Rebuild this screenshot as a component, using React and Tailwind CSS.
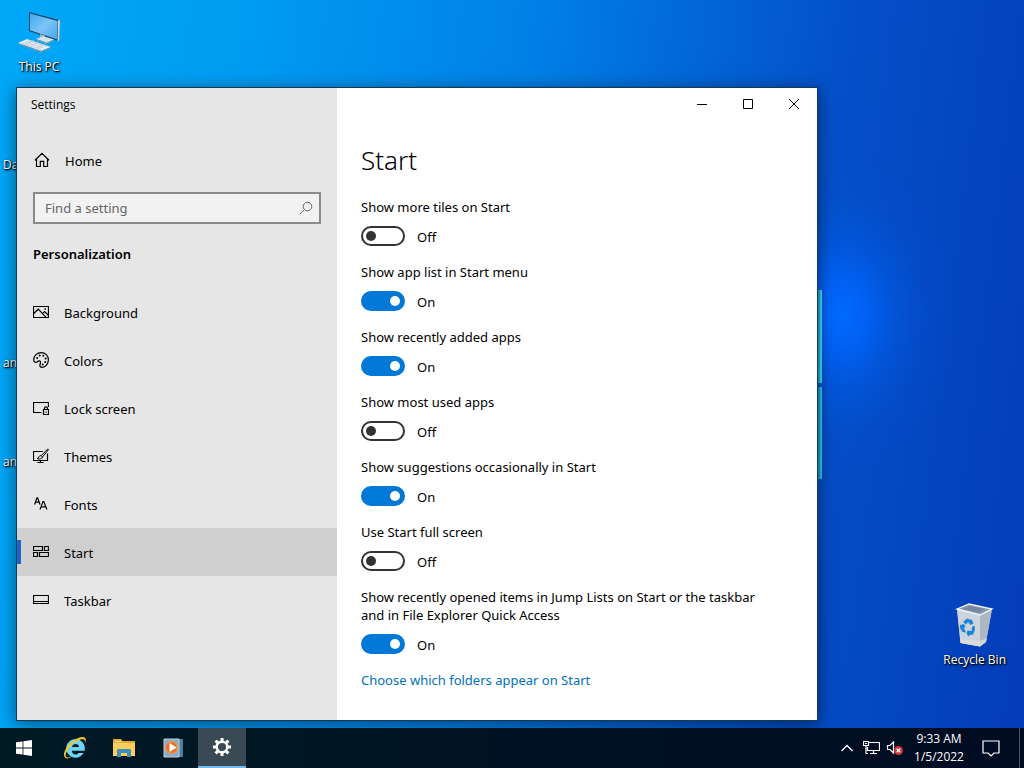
import React, { useState } from 'react';

const NAV_ITEMS = [
  { id: 'background', label: 'Background', icon: BackgroundIcon },
  { id: 'colors', label: 'Colors', icon: ColorsIcon },
  { id: 'lock', label: 'Lock screen', icon: LockScreenIcon },
  { id: 'themes', label: 'Themes', icon: ThemesIcon },
  { id: 'fonts', label: 'Fonts', icon: FontsIcon },
  { id: 'start', label: 'Start', icon: StartTilesIcon },
  { id: 'taskbar', label: 'Taskbar', icon: TaskbarIcon },
];

const SETTINGS = [
  { id: 'tiles', label: 'Show more tiles on Start', on: false },
  { id: 'app-list', label: 'Show app list in Start menu', on: true },
  { id: 'recent-apps', label: 'Show recently added apps', on: true },
  { id: 'most-used', label: 'Show most used apps', on: false },
  { id: 'suggestions', label: 'Show suggestions occasionally in Start', on: true },
  { id: 'full-screen', label: 'Use Start full screen', on: false },
  {
    id: 'jump-lists',
    label: 'Show recently opened items in Jump Lists on Start or the taskbar and in File Explorer Quick Access',
    on: true,
  },
];

// Thin 16px line icons used in the sidebar
function LineIcon({ children }) {
  return (
    <svg
      width="16"
      height="16"
      viewBox="0 0 16 16"
      fill="none"
      stroke="currentColor"
      strokeWidth="1.2"
      aria-hidden="true"
      className="shrink-0"
    >
      {children}
    </svg>
  );
}

function HomeIcon() {
  return (
    <LineIcon>
      <path d="M1 8.2 8 1.3l7 6.9M2.5 7v7.5h3.8V9.3h3.4v5.2h3.8V7" />
    </LineIcon>
  );
}

function BackgroundIcon() {
  return (
    <LineIcon>
      <path d="M.5 2.5h15v11H.5z" />
      <path d="m.7 9.5 4.6-4.3 7.7 8.1M9.6 9.4l2-1.8 3.8 3.7" />
      <path d="M11.5 5h1.4" strokeWidth="1.4" />
    </LineIcon>
  );
}

function ColorsIcon() {
  return (
    <LineIcon>
      <path d="M.7 7.8C.8 3.7 4.1.6 8.2.6c4.1 0 7.2 3.2 7.2 7.2 0 4.2-2.9 7.6-6.2 7.6-1.7 0-2.4-.9-2.3-2.2.1-1.3.8-1.900.6-3C7.300 9.200 6.600 8.700 5.800 8.900c-1.100.3-1.500 1.400-2.900 1.400C1.400 10.300.7 9.100.7 7.800z" />
      <g fill="currentColor" stroke="none">
        <circle cx="4.2" cy="6" r="1" />
        <circle cx="6.7" cy="3.5" r="1" />
        <circle cx="10.3" cy="3.7" r="1" />
        <circle cx="12.6" cy="6.5" r="1" />
        <circle cx="12.2" cy="9.9" r="1" />
        <circle cx="9.7" cy="12.4" r="1" />
      </g>
    </LineIcon>
  );
}

function LockScreenIcon() {
  return (
    <LineIcon>
      <path d="M8.5 12.500h-8v-10h15v4.500" />
      <path d="M10.500 9.500h5v5h-5zM11.500 9.500V8.300a1.500 1.500 0 0 1 3 0v1.200M13 11.500v1.200" />
    </LineIcon>
  );
}

function ThemesIcon() {
  return (
    <LineIcon>
      <path d="M10 3.500H.5v9h14V5.500M7.500 12.500v2M4.500 14.500h6" />
      <path
        d="m14.800.9-6.600 6.800 1.300 1.300 6-7.400zM8.200 7.700c-1.500-.2-2.300.6-2.600 1.700-.2.700-.7 1-1.600 1.200 2.300.8 5 .4 5.500-1.600"
        strokeWidth="1"
      />
    </LineIcon>
  );
}

function FontsIcon() {
  return (
    <LineIcon>
      <path d="M1.600 8.500 4 1.800h.6L7 8.500M2.500 6.200h3.600M7 13.500l3-8h.8l3.100 8M8 10.900h4.900" />
    </LineIcon>
  );
}

function StartTilesIcon() {
  return (
    <LineIcon>
      <path d="M.5 2.500h9v4h-9zM11.500 2.500h4v4h-4zM.5 8.500h4v4h-4zM6.500 8.500h9v4h-9z" />
    </LineIcon>
  );
}

function TaskbarIcon() {
  return (
    <LineIcon>
      <path d="M.5 3.500h15v8H.5zM.5 9.500h15" />
    </LineIcon>
  );
}

function ThisPcIcon() {
  return (
    <svg width="46" height="46" viewBox="0 0 46 46" aria-hidden="true">
      <defs>
        <linearGradient id="pc-screen" x1="0" y1="0" x2="1" y2="1">
          <stop offset="0" stopColor="#3fa9f0" />
          <stop offset=".5" stopColor="#7cc4f6" />
          <stop offset="1" stopColor="#45a6ee" />
        </linearGradient>
      </defs>
      <path d="M13 2 43 10 42 31 13 21z" fill="#1d4568" />
      <path d="m42 10 2 .6-.8 20-1.700.7z" fill="#c8d5dc" />
      <path d="M14 3.500 41.500 11 41 29.300 14 20.200z" fill="url(#pc-screen)" />
      <path d="m24 24 5 1.800v2.500l-5-1.600z" fill="#9db4c2" />
      <path d="m20 29 7-2.700 11 3.200-7 3.300z" fill="#d7e2e8" />
      <path d="m20 29 11 3.800 7-3.300v1l-7 3.500-11-4z" fill="#7f9bab" />
      <path d="M2 33 11 29 35 37 25 41z" fill="#e9eff2" />
      <path d="m2 33 23 8 10-4v1l-10 4.500L2 34z" fill="#7995a8" />
      <path d="m6 33 19 6.600M9 31.700l19 6.500M12 30.500l19 6M10 34l8-3.500M15 36l8-4M21 38l8-4" stroke="#b9c7d0" strokeWidth=".8" />
    </svg>
  );
}

function RecycleBinIcon() {
  return (
    <svg width="42" height="46" viewBox="0 0 42 46" aria-hidden="true">
      <path d="M3 6 15 1l23 5-6 33-6 4.500L6.500 40z" fill="#b9c3cf" />
      <path d="m3 6 23 6 0 31.500L6.500 40z" fill="#ccd3da" />
      <path d="m26 12 12-6-6 33-6 4.500z" fill="#aeb6c2" />
      <path d="M3 6 15 1l23 5-12 6z" fill="#8a9cb2" stroke="#eef3f7" strokeWidth="1.300" />
      <path d="m8 6 8-3 15 3-6 3.500z" fill="#76889e" />
      <path d="m6 36 1 4 19 3.500 6-4.500.6-4-7 3z" fill="#e3e1dc" opacity=".7" />
      <g fill="#1b86d8">
        <path d="m9 19 4-3.500 5 1.500 1.500 3.500-3 1.500-2.500-3-2 2.500z" />
        <path d="m6 22 4-1 1.500 3-1.500 1 2 4.500-3.500-.5L6 25z" />
        <path d="m13.500 27.500 4 .5.500-4 2.500-1.500L21 27l-2 4.500-4 .8-.5 1.500-2-3.500z" />
      </g>
    </svg>
  );
}

function WindowsIcon() {
  return (
    <svg width="16" height="16" viewBox="0 0 16 16" fill="#fff" aria-hidden="true">
      <path d="M0 2.300 6.600 1.400v6.200H0zM7.400 1.300 16 0v7.600H7.400zM0 8.400h6.600v6.200L0 13.700zM7.400 8.400H16V16l-8.600-1.300z" />
    </svg>
  );
}

function InternetExplorerIcon() {
  return (
    <svg width="24" height="24" viewBox="0 0 24 24" aria-hidden="true">
      <path
        d="M21.800 12.800A9.300 9.300 0 1 0 20.600 17h-5.100c-.7 1-1.700 1.500-2.900 1.500-2.200 0-3.600-1.500-3.700-3.700h12.800c.1-.7.1-1.400.1-2zM9 11c.4-1.900 1.700-3 3.600-3s3.200 1.100 3.400 3z"
        fill="#6dd5f7"
      />
      <path
        d="M3.200 22.300C-.6 20.500.6 14.500 5.800 8.800 11 3.100 18.600-.6 21.700 1.500c1.600 1.100 1.400 3.500 0 6 .5-2.200.3-3.500-.9-4-2.800-1-8.700 1.800-13.200 6.700C3 15.200 1.400 20 3.700 21.200c1.400.7 3.400.1 5.500-1.100-2 1.700-4.400 2.900-6 2.200z"
        fill="#f3c62c"
      />
    </svg>
  );
}

function ExplorerIcon() {
  return (
    <svg width="22" height="20" viewBox="0 0 22 20" aria-hidden="true">
      <path d="M0 2c0-.6.4-1 1-1h7l1.500 2H21c.6 0 1 .4 1 1v4H0z" fill="#e9a92c" />
      <path d="M2 3.500h6" stroke="#fff" strokeWidth=".8" />
      <path d="M0 5h22v13H0z" fill="#fbcf58" />
      <path d="M4 19v-6.500C4 11.700 4.700 11 5.500 11h11c.8 0 1.500.7 1.500 1.500V19h-4v-4H8v4z" fill="#3f8cc4" />
    </svg>
  );
}

function MediaPlayerIcon() {
  return (
    <svg width="20" height="20" viewBox="0 0 20 20" aria-hidden="true">
      <path d="M4 1h16v18H4z" fill="#4d7f9c" />
      <path d="M1 1h15v18H1z" fill="#88adc4" />
      <path d="M1 1h15v18H1z" fill="none" stroke="#b8d2e0" />
      <circle cx="8.500" cy="9.500" r="6.500" fill="#e8742c" />
      <circle cx="8.500" cy="9.500" r="6" fill="none" stroke="#f4a56b" />
      <path d="m6.500 5 7 4.500-7 4.500z" fill="#fff" />
    </svg>
  );
}

function GearIcon() {
  return (
    <svg width="20" height="20" viewBox="0 0 20 20" fill="none" stroke="#fff" aria-hidden="true">
      <circle cx="10" cy="10" r="5.300" strokeWidth="2.400" />
      <path
        d="M10 1v3.500M10 15.500V19M1 10h3.500M15.500 10H19M3.600 3.600l2.500 2.500M13.900 13.900l2.500 2.500M3.600 16.400l2.500-2.500M13.900 6.100l2.500-2.500"
        strokeWidth="3"
      />
    </svg>
  );
}

function DesktopShortcut({ className, icon, label }) {
  return (
    <button
      type="button"
      className={`absolute flex flex-col items-center gap-[3px] font-['Open_Sans','Noto_Sans',sans-serif] text-xs leading-4 text-white text-shadow-[1px_1px_1px_#000,1px_1px_3px_#000] ${className}`}
    >
      {icon}
      <span className="whitespace-nowrap">{label}</span>
    </button>
  );
}

function Wallpaper() {
  return (
    <div className="absolute inset-0 overflow-hidden bg-[linear-gradient(97deg,#00a8f8_0%,#009cf2_22%,#0080e6_48%,#0450c8_76%,#043cb8_100%)]">
      <div className="absolute inset-0 bg-[radial-gradient(ellipse_120px_160px_at_82%_41%,#006affff_0%,#0066ffd0_20%,#0060f070_45%,#0058e020_72%,#0050d000_100%)]" />
      <div className="absolute top-[290px] right-[202px] h-[93px] w-5 border-r-2 border-[#4cdcf8] bg-[#20b0d8]" />
      <div className="absolute top-[387px] right-[202px] h-[92px] w-5 border-r-2 border-[#38c8f0] bg-[#18a0d0]" />
    </div>
  );
}

function Toggle({ id, label, on, onChange }) {
  return (
    <div className="flex flex-col gap-[10px]">
      <label htmlFor={id}>{label}</label>
      <div className="flex h-5 items-center gap-3">
        <input
          id={id}
          type="checkbox"
          role="switch"
          checked={on}
          onChange={onChange}
          className="relative h-5 w-11 shrink-0 appearance-none rounded-full border-2 border-[#333] bg-white before:absolute before:top-[3px] before:left-[3px] before:size-[10px] before:rounded-full before:bg-[#333] checked:border-[#0078d7] checked:bg-[#0078d7] checked:before:left-[27px] checked:before:bg-white"
        />
        <span className="pt-0.5">{on ? 'On' : 'Off'}</span>
      </div>
    </div>
  );
}

function Sidebar({ active, onSelect }) {
  return (
    <aside className="flex w-80 shrink-0 flex-col bg-[#e6e6e6]">
      <div className="flex h-8 items-center px-[14px] pt-0.5 font-['Open_Sans','Noto_Sans',sans-serif] text-xs">Settings</div>
      <button type="button" className="mt-4 flex h-12 items-center gap-[15px] px-[17px] text-left">
        <HomeIcon />
        <span className="pt-0.5">Home</span>
      </button>
      <div className="mx-4 mt-2 flex h-8 items-center border-2 border-[#8a8a8a] bg-[#f2f2f2] pr-1.5 pl-[10px]">
        <input
          type="text"
          aria-label="Find a setting"
          placeholder="Find a setting"
          className="min-w-0 flex-1 bg-transparent outline-none placeholder:text-[#666]"
        />
        <svg width="14" height="14" viewBox="0 0 14 14" fill="none" stroke="#666" aria-hidden="true">
          <circle cx="8.500" cy="5.500" r="4.300" />
          <path d="M5.400 8.600.8 13.200" />
        </svg>
      </div>
      <h2 className="mt-5 mb-6 px-4 leading-5 font-semibold">Personalization</h2>
      <nav className="flex flex-col">
        {NAV_ITEMS.map(({ id, label, icon: Icon }) => (
          <button
            key={id}
            type="button"
            onClick={() => onSelect(id)}
            className={`relative flex h-12 items-center gap-[15px] px-4 text-left ${id === active ? 'bg-[#cfcfcf]' : ''}`}
          >
            {id === active && <span className="absolute top-3 left-0 h-6 w-1 bg-[#1a66c8]" />}
            <Icon />
            <span className="pt-0.5">{label}</span>
          </button>
        ))}
      </nav>
    </aside>
  );
}

function WindowControls() {
  const button = 'flex h-8 w-[46px] items-center justify-center';
  return (
    <div className="flex justify-end">
      <button type="button" aria-label="Minimize" className={button}>
        <svg width="10" height="10" viewBox="0 0 10 10" stroke="#000">
          <path d="M0 5.500h10" />
        </svg>
      </button>
      <button type="button" aria-label="Maximize" className={button}>
        <svg width="10" height="10" viewBox="0 0 10 10" fill="none" stroke="#000">
          <path d="M.5.500h9v9h-9z" />
        </svg>
      </button>
      <button type="button" aria-label="Close" className={button}>
        <svg width="10" height="10" viewBox="0 0 10 10" stroke="#000">
          <path d="m0 0 10 10M10 0 0 10" />
        </svg>
      </button>
    </div>
  );
}

function SettingsWindow() {
  const [active, setActive] = useState('start');
  const [settings, setSettings] = useState(SETTINGS);

  const toggle = (id) => {
    setSettings((prev) => prev.map((s) => (s.id === id ? { ...s, on: !s.on } : s)));
  };

  return (
    <section className="relative flex flex-1 border border-[#123a5a] bg-white text-[13px] leading-[18px] text-black shadow-[0_3px_16px_rgba(0,0,0,0.5)]">
      <Sidebar active={active} onSelect={setActive} />
      <div className="flex min-w-0 flex-1 flex-col">
        <WindowControls />
        <main className="flex flex-col pt-[22px] pr-14 pb-7 pl-6">
          <h1 className="mb-5 text-[26px] leading-9 font-light">Start</h1>
          <div className="flex flex-col items-start gap-[17px]">
            {settings.map((s) => (
              <Toggle key={s.id} id={s.id} label={s.label} on={s.on} onChange={() => toggle(s.id)} />
            ))}
            <a href="#folders" className="text-[#0070c0]">
              Choose which folders appear on Start
            </a>
          </div>
        </main>
      </div>
    </section>
  );
}

function Taskbar() {
  const app = 'flex w-12 items-center justify-center';
  return (
    <footer className="relative flex h-10 justify-between bg-linear-to-r from-[#001a24] to-[#000b22] text-white">
      <div className="flex gap-px">
        <button type="button" aria-label="Start" className={`${app} mr-0.5`}>
          <WindowsIcon />
        </button>
        <button type="button" aria-label="Internet Explorer" className={app}>
          <InternetExplorerIcon />
        </button>
        <button type="button" aria-label="File Explorer" className={app}>
          <ExplorerIcon />
        </button>
        <button type="button" aria-label="Media Player" className={app}>
          <MediaPlayerIcon />
        </button>
        <button type="button" aria-label="Settings" className={`${app} border-b-2 border-[#76b9ed] bg-[#394a54]`}>
          <GearIcon />
        </button>
      </div>
      <div className="flex items-stretch">
        <button type="button" aria-label="Show hidden icons" className="flex w-6 items-center justify-center">
          <svg width="12" height="8" viewBox="0 0 12 8" fill="none" stroke="#fff" strokeWidth="1.300">
            <path d="m.5 7 5.500-5.500L11.500 7" />
          </svg>
        </button>
        <button type="button" aria-label="Network" className="flex w-6 items-center justify-center">
          <svg width="17" height="14" viewBox="0 0 17 14" fill="none" stroke="#fff" strokeWidth="1.200">
            <path d="M6 1.500h10.500v8h-12V6M10.500 9.500v3M7 12.500h7M.5.500h5v4h-5zM3 4.500v8h2" />
            <path d="M2 2.500h2" />
          </svg>
        </button>
        <button type="button" aria-label="Volume muted" className="flex w-6 items-center justify-center">
          <svg width="18" height="16" viewBox="0 0 18 16" fill="none" stroke="#fff" strokeWidth="1.200">
            <path d="M1.500 5.500H4l3.500-3.500v11L4 9.500H1.500z" />
            <circle cx="12.500" cy="10.500" r="4.500" fill="#d13438" stroke="none" />
            <path d="m10.700 8.700 3.600 3.600M14.300 8.700l-3.600 3.600" strokeWidth="1.300" />
          </svg>
        </button>
        <button
          type="button"
          className="flex w-16 flex-col items-center justify-center font-['Open_Sans','Noto_Sans',sans-serif] text-xs leading-[18px]"
        >
          <span>9:33 AM</span>
          <span>1/5/2022</span>
        </button>
        <button type="button" aria-label="Notifications" className="flex w-10 items-center justify-center">
          <svg width="18" height="17" viewBox="0 0 18 17" fill="none" stroke="#fff" strokeWidth="1.200">
            <path d="M1 1h16v12h-5l-3 3-3-3H1z" />
          </svg>
        </button>
        <button type="button" aria-label="Show desktop" className="ml-2 w-[5px] border-l border-[#4a5568]" />
      </div>
    </footer>
  );
}

export default function App() {
  return (
    <div className="relative flex min-h-screen flex-col font-['Noto_Sans','Open_Sans',sans-serif]">
      <Wallpaper />
      <DesktopShortcut className="top-[10px] left-4" icon={<ThisPcIcon />} label="This PC" />
      <DesktopShortcut className="top-[157px] left-[3px]" label="Da" />
      <DesktopShortcut className="top-[355px] left-[3px]" label="am" />
      <DesktopShortcut className="top-[454px] left-[3px]" label="am" />
      <DesktopShortcut className="right-[18px] bottom-[100px]" icon={<RecycleBinIcon />} label="Recycle Bin" />
      <div className="flex flex-1 pt-[87px] pr-[206px] pb-[7px] pl-4">
        <SettingsWindow />
      </div>
      <Taskbar />
    </div>
  );
}
